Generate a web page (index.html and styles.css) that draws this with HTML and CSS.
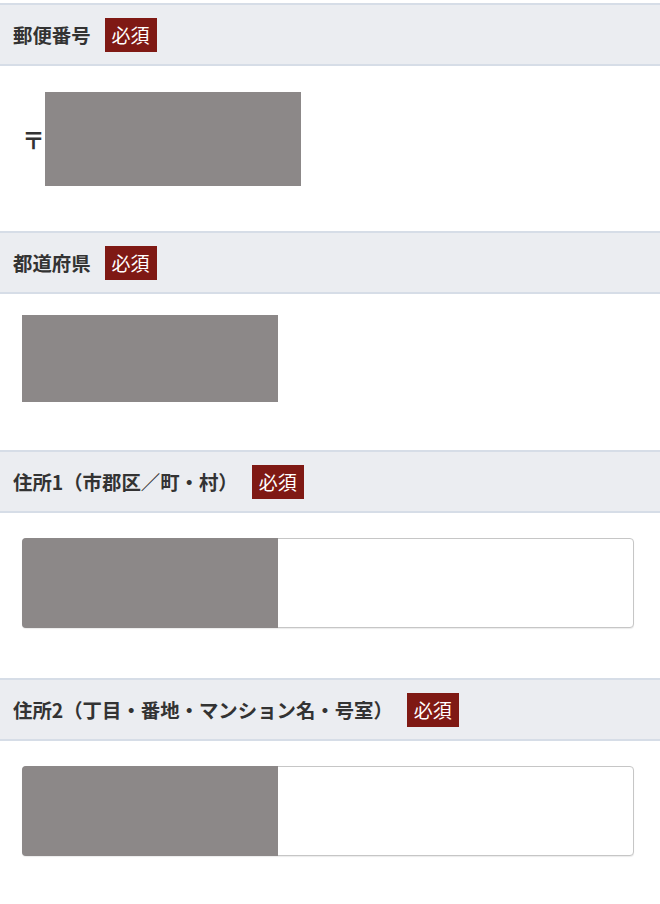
FILE: index.html
```html
<!DOCTYPE html>
<html lang="ja">
<head>
<meta charset="utf-8">
<title>住所入力</title>
<link rel="stylesheet" href="styles.css">
</head>
<body>
<div class="form">
  <section class="field field-zip">
    <div class="head"><span class="label">郵便番号</span><span class="badge">必須</span></div>
    <div class="body">
      <div class="zip"><span class="mark">〒</span><div class="redact redact-zip"></div></div>
    </div>
  </section>
  <section class="field field-pref">
    <div class="head"><span class="label">都道府県</span><span class="badge">必須</span></div>
    <div class="body">
      <div class="redact redact-pref"></div>
    </div>
  </section>
  <section class="field field-addr">
    <div class="head"><span class="label">住所1（市郡区／町・村）</span><span class="badge">必須</span></div>
    <div class="body">
      <div class="input"><div class="redact redact-input"></div></div>
    </div>
  </section>
  <section class="field field-addr last">
    <div class="head"><span class="label">住所2（丁目・番地・マンション名・号室）</span><span class="badge">必須</span></div>
    <div class="body">
      <div class="input"><div class="redact redact-input"></div></div>
    </div>
  </section>
</div>
</body>
</html>
```

FILE: styles.css
```css
html, body {
  margin: 0;
  padding: 0;
  background: #ffffff;
}
body {
  font-family: "Noto Sans CJK JP", "Noto Sans", sans-serif;
  color: #333333;
}
.form {
  padding-top: 3px;
  width: 660px;
}
.head {
  display: flex;
  align-items: center;
  height: 59px;
  background: #ebedf1;
  border-top: 2px solid #d6dde7;
  border-bottom: 2px solid #d6dde7;
  padding-left: 13px;
}
.label {
  font-size: 19.4px;
  font-weight: 700;
  line-height: 1;
  color: #333333;
}
.badge {
  display: flex;
  align-items: center;
  justify-content: center;
  width: 52px;
  height: 34px;
  margin-left: 14px;
  background: #7f1914;
  color: #ffffff;
  font-size: 19px;
  font-weight: 400;
  line-height: 1;
}
.redact {
  background: #8c8888;
}
.field-zip .body {
  padding: 26px 0 45px 22px;
}
.zip {
  display: flex;
  align-items: center;
}
.mark {
  font-size: 23px;
  font-weight: 700;
  line-height: 1;
  color: #333333;
  width: 23px;
}
.redact-zip {
  width: 256px;
  height: 94px;
}
.field-pref .body {
  padding: 21px 0 48px 22px;
}
.redact-pref {
  width: 256px;
  height: 87px;
}
.field-addr .body {
  padding: 25px 26px 50px 22px;
}
.field-addr.last .body {
  padding-bottom: 48px;
}
.input {
  display: flex;
  height: 88px;
  border: 1px solid #c6c6c6;
  border-radius: 4px;
  background: #ffffff;
  box-shadow: 0 1px 1px rgba(0, 0, 0, 0.08);
}
.redact-input {
  width: 256px;
  margin: -1px 0 -1px -1px;
  border-radius: 4px 0 0 4px;
}
```
